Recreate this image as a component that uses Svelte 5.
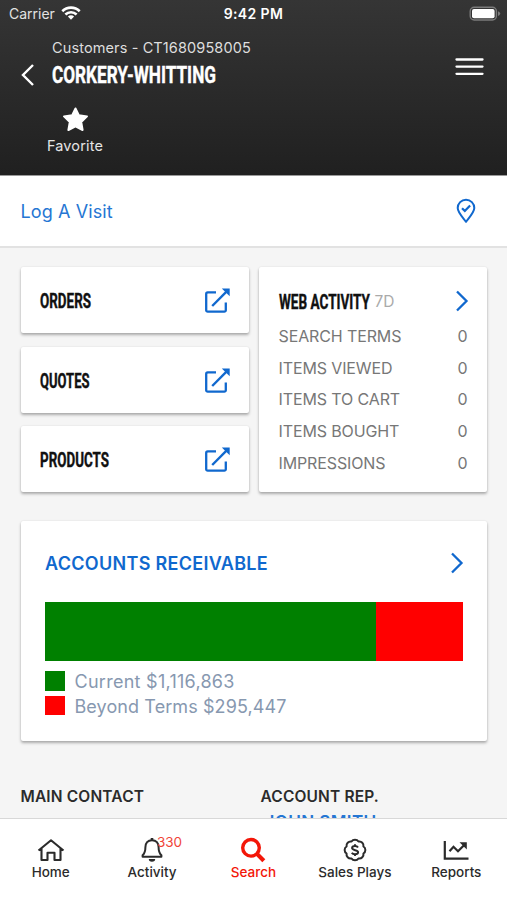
<script>
  const links = [
    { label: 'ORDERS', width: 51 },
    { label: 'QUOTES', width: 49.5 },
    { label: 'PRODUCTS', width: 69 }
  ];
  const activity = [
    { label: 'SEARCH TERMS', value: 0 },
    { label: 'ITEMS VIEWED', value: 0 },
    { label: 'ITEMS TO CART', value: 0 },
    { label: 'ITEMS BOUGHT', value: 0 },
    { label: 'IMPRESSIONS', value: 0 }
  ];
  const current = 1116863;
  const beyond = 295447;
  const share = (current / (current + beyond)) * 100;
  const money = (n) => '$' + n.toLocaleString('en-US');
</script>

{#snippet condensed(label, width, size)}
  <svg class="condensed" width={width} height="24" viewBox="0 0 {width} 24">
    <text x="0" y="20" font-size={size} textLength={width} lengthAdjust="spacingAndGlyphs">{label}</text>
  </svg>
{/snippet}

{#snippet chevron()}
  <svg class="chevron" width="14" height="22" viewBox="0 0 14 22"><path d="M2 1.5 11.5 11 2 20.5" /></svg>
{/snippet}

<div class="screen">
  <header>
    <div class="status">
      <div class="carrier">
        <span>Carrier</span>
        <svg width="20" height="14" viewBox="0 0 20 14" fill="none" stroke="#fff" stroke-width="2.6">
          <path d="M1.3 5.2a12.4 12.4 0 0 1 17.4 0" />
          <path d="M4.4 8.5a8 8 0 0 1 11.2 0" />
          <path d="M10 13.8 6.9 10.6a4.4 4.4 0 0 1 6.2 0z" fill="#fff" stroke="none" />
        </svg>
      </div>
      <span class="time">9:42 PM</span>
      <div class="battery">
        <svg width="32" height="16" viewBox="0 0 32 16">
          <rect x="1.2" y="1.2" width="26.2" height="12.8" rx="4" fill="none" stroke="#7b7b7b" stroke-width="1.4" />
          <rect x="3" y="3" width="22.6" height="9.2" rx="2" fill="#fff" />
          <path d="M29 5.2q2.2.8 2.2 2.4T29 10z" fill="#7b7b7b" />
        </svg>
      </div>
    </div>
    <div class="titlebar">
      <svg class="back" width="16" height="24" viewBox="0 0 16 24"><path d="M13 2 3 12l10 10" fill="none" stroke="#fff" stroke-width="2.4" /></svg>
      <div class="titles">
        <span class="crumb">Customers - CT1680958005</span>
        <h1>{@render condensed('CORKERY-WHITTING', 164, 23.3)}</h1>
      </div>
      <svg class="menu" width="29" height="20" viewBox="0 0 29 20" stroke="#fff" stroke-width="2.3" stroke-linecap="round"><path d="M1.5 2.5h26M1.5 9.6h26M1.5 16.8h26" /></svg>
    </div>
    <div class="favorite">
      <svg width="28" height="28" viewBox="0 0 28 28"><path d="M14.5 3.5 17.8 10.2 26 11.4 20.2 17 21.6 25 14.5 21.4 7.4 25 8.8 17 3 11.400 11.200 10.200Z" fill="#fff" stroke="#fff" stroke-width="2" stroke-linejoin="round" /></svg>
      <span>Favorite</span>
    </div>
  </header>

  <section class="visit">
    <span>Log A Visit</span>
    <svg width="20" height="26" viewBox="0 0 20 26" fill="none" stroke="#1068ce" stroke-width="2">
      <path d="M10 23.8C7.4 20.2 1.7 14.4 1.7 10a8.3 8.3 0 0 1 16.6 0c0 4.4-5.7 10.2-8.3 13.8z" stroke-linejoin="round" />
      <path d="m6 10.2 2.8 2.7 5.3-5.5" stroke-width="2.2" />
    </svg>
  </section>

  <main>
    <div class="grid">
      <div class="links">
        {#each links as link}
          <div class="card link">
            {@render condensed(link.label, link.width, 19.3)}
            <svg width="28" height="28" viewBox="0 0 28 28">
              <path d="M13 6.4H4.7a1.500 1.500 0 0 0-1.500 1.500V24.200a1.500 1.500 0 0 0 1.500 1.500h16.600a1.500 1.500 0 0 0 1.500-1.500V16.500" fill="none" stroke="#1068ce" stroke-width="2.3" />
              <path d="M9.200 20 24 5.200" stroke="#1068ce" stroke-width="2.4" />
              <path d="M18.800 2.400h7.900v7.900z" fill="#1068ce" />
            </svg>
          </div>
        {/each}
      </div>
      <div class="card web">
        <div class="webhead">
          {@render condensed('WEB ACTIVITY', 91, 19.3)}
          <span class="period">7D</span>
          {@render chevron()}
        </div>
        {#each activity as row}
          <div class="stat"><span>{row.label}</span><span>{row.value}</span></div>
        {/each}
      </div>
    </div>

    <div class="card receivable">
      <div class="rechead">
        <h2>ACCOUNTS RECEIVABLE</h2>
        {@render chevron()}
      </div>
      <div class="bar"><div class="current" style="width: {share}%"></div></div>
      <div class="legend"><i class="current"></i><span class="l1">Current {money(current)}</span></div>
      <div class="legend"><i class="beyond"></i><span class="l2">Beyond Terms {money(beyond)}</span></div>
    </div>

    <div class="contacts">
      <div><h3>MAIN CONTACT</h3></div>
      <div>
        <h3 class="rep">ACCOUNT REP.</h3>
        <span class="name">JOHN SMITH</span>
      </div>
    </div>
  </main>

  <nav>
    <div class="tab">
      <svg width="30" height="28" viewBox="0 0 30 28" fill="none" stroke="#2b2b2b" stroke-width="2.1" stroke-linejoin="round">
        <path d="M2.500 14.500 15 4.300 27.500 14.500M5.500 12.300V24h6v-7.200h7V24h6V12.300" />
      </svg>
      <span>Home</span>
    </div>
    <div class="tab">
      <svg width="28" height="28" viewBox="0 0 28 28" fill="none" stroke="#2b2b2b" stroke-width="2" stroke-linejoin="round">
        <path d="M14 4.200c-4.300 0-6.600 3-6.600 7 0 5-1.100 6.500-2.800 8v1.600h18.800v-1.600c-1.700-1.500-2.800-3-2.800-8 0-4-2.300-7-6.600-7z" />
        <path d="M14 2v2.500" stroke-width="2.6" />
        <path d="M10.800 23h6.400a3.200 2.800 0 0 1-6.400 0z" fill="#2b2b2b" stroke="none" />
      </svg>
      <span>Activity</span>
      <b class="badge">330</b>
    </div>
    <div class="tab active">
      <svg width="28" height="28" viewBox="0 0 28 28" fill="none" stroke="#f31608">
        <circle cx="12" cy="11.800" r="8.300" stroke-width="3.400" />
        <path d="m18 17.900 6.800 6.900" stroke-width="4.200" />
      </svg>
      <span>Search</span>
    </div>
    <div class="tab">
      <svg width="28" height="28" viewBox="0 0 28 28" fill="none" stroke="#2b2b2b" stroke-width="2" stroke-linejoin="round">
        <path d="M10.5 4.600a4.100 4.100 0 0 1 7 0 4.100 4.100 0 0 1 4.900 4.900 4.100 4.100 0 0 1 0 7 4.100 4.100 0 0 1-4.900 4.900 4.100 4.100 0 0 1-7 0 4.100 4.100 0 0 1-4.900-4.900 4.100 4.100 0 0 1 0-7 4.100 4.100 0 0 1 4.900-4.900z" transform="translate(0 1)" />
        <path d="M17 11.500c-.6-1-1.700-1.400-3-1.400-1.700 0-2.900.8-2.900 2 0 2.800 6 1.400 6 4.200 0 1.300-1.300 2-3.100 2-1.400 0-2.600-.5-3.200-1.500M14 8.300v1.700M14 18.300v1.700" />
      </svg>
      <span>Sales Plays</span>
    </div>
    <div class="tab">
      <svg width="28" height="28" viewBox="0 0 28 28" fill="none" stroke="#2b2b2b" stroke-width="2.2">
        <path d="M2.800 5v17.600h23.700" />
        <path d="m7.500 15.300 4-4.500 4.500 4.500 6-6" />
        <path d="M17.500 6.200h7.300v7.300z" fill="#2b2b2b" stroke="none" />
      </svg>
      <span>Reports</span>
    </div>
  </nav>
</div>

<style>
  :global(body) { margin: 0; }
  .screen {
    width: 507px;
    height: 900px;
    display: flex;
    flex-direction: column;
    overflow: hidden;
    background: #f5f5f5;
    color: #2b2b2b;
    font-family: Inter, "Liberation Sans", sans-serif;
  }
  svg { display: block; flex: none; }
  span { white-space: nowrap; }
  h1, h2, h3 { margin: 0; }
  .condensed { overflow: visible; font-family: Roboto, sans-serif; font-weight: 700; fill: currentColor; stroke: currentColor; stroke-width: 0.4; }
  .chevron { fill: none; stroke: #1068ce; stroke-width: 2.3; }

  header {
    height: 175px;
    flex: none;
    border-bottom: 1px solid #999;
    background: linear-gradient(#353535, #202020);
    color: #fff;
  }
  .status { height: 27px; display: grid; grid-template-columns: 1fr auto 1fr; align-items: center; font-size: 14px; }
  .carrier { display: flex; align-items: center; gap: 6px; padding-left: 9px; color: #e2e2e2; }
  .carrier svg { margin-top: -1px; }
  .time { font-weight: 600; font-size: 14px; letter-spacing: 0.4px; }
  .battery { display: flex; justify-content: flex-end; padding-right: 6px; }
  .titlebar { display: flex; padding: 12px 23px 0 20px; height: 61px; }
  .back { margin-top: 24px; }
  .titles { flex: 1; padding-left: 16px; }
  .crumb { display: block; height: 18px; line-height: 18px; font-size: 14.5px; color: #dedede; letter-spacing: 0.12px; }
  h1 { margin-top: 6px; }
  .menu { margin-top: 18px; }
  .favorite { width: 56px; margin: 5px 0 0 47px; display: flex; flex-direction: column; align-items: center; color: #e5e5e5; font-size: 14.5px; letter-spacing: 0.15px; }
  .favorite span { line-height: 18px; margin-top: 4px; }

  .visit {
    height: 70px;
    flex: none;
    display: flex;
    align-items: center;
    justify-content: space-between;
    padding: 0 31px 0 20.5px;
    border-bottom: 2px solid #e2e2e2;
    background: #fff;
    color: #2576d3;
    font-size: 18px;
    letter-spacing: 0.1px;
  }

  main { flex: 1; min-height: 0; overflow: hidden; padding: 19px 20px 0; }
  .card { background: #fff; border-radius: 2px; box-shadow: 0 2px 3px rgba(0, 0, 0, 0.3), 0 0 2px rgba(0, 0, 0, 0.08); }
  .grid { display: grid; grid-template-columns: 228px 228px; gap: 10px; height: 225px; padding-left: 1px; }
  .links { display: flex; flex-direction: column; justify-content: space-between; }
  .link { height: 66px; display: flex; align-items: center; justify-content: space-between; padding: 0 18px 0 19px; color: #111; }
  .web { padding: 20px 19.5px 0; color: #777; }
  .webhead { display: flex; align-items: center; height: 28px; color: #111; }
  .period { flex: 1; margin: 1px 0 0 5px; font-size: 15.5px; color: #aaa; }
  .webhead .chevron { margin-right: -1px; }
  .stat { display: flex; justify-content: space-between; height: 31.7px; line-height: 43px; font-size: 16px; letter-spacing: -0.12px; }
  .receivable { height: 192px; margin: 29px 0 0 1px; padding: 28px 24px 0; }
  .rechead { display: flex; align-items: center; justify-content: space-between; height: 28px; }
  .rechead .chevron { margin-right: -1px; }
  h2 { font-size: 18px; font-weight: 600; color: #1068ce; line-height: 28px; letter-spacing: 0.3px; padding-top: 2px; }
  .bar { height: 59px; margin: 25px 0 10px; background: #f00; display: flex; }
  .current { background: #008000; }
  .beyond { background: #f00; }
  .legend { display: flex; align-items: center; gap: 10px; height: 20px; margin-bottom: 4.6px; font-size: 18px; color: #8798b0; }
  .legend i { width: 19.5px; height: 19.5px; }
  .legend span { padding-top: 1px; }
  .l1 { letter-spacing: 0.27px; }
  .l2 { letter-spacing: 0.09px; }
  .contacts { display: grid; grid-template-columns: 240px 1fr; padding: 46px 0 0 0.5px; }
  h3 { font-size: 15.5px; font-weight: 600; line-height: 20px; letter-spacing: 0.15px; }
  .name { display: block; margin: 5px 0 0 4px; font-size: 17px; line-height: 20px; font-weight: 600; letter-spacing: 0.4px; color: #2576d3; }

  nav {
    height: 82px;
    flex: none;
    display: grid;
    grid-template-columns: repeat(5, 1fr);
    box-sizing: border-box;
    border-top: 1px solid #d8d8d8;
    background: #fff;
  }
  .tab { position: relative; display: flex; flex-direction: column; align-items: center; padding-top: 17px; font-size: 13.5px; font-weight: 500; }
  .tab span { line-height: 16px; }
  .active { color: #f31608; }
  .badge { position: absolute; left: 55.5px; top: 15px; font-size: 13.5px; font-weight: 400; line-height: 16px; color: #f04438; }
</style>
